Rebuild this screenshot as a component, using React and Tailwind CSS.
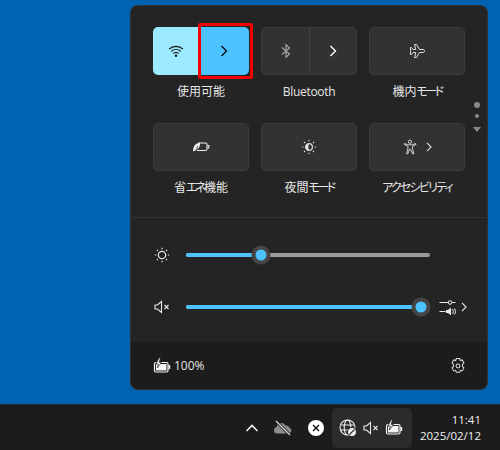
const font = { fontFamily: '"Open Sans","Noto Sans CJK JP",sans-serif' };

const Chevron = ({ c = "#fff", s = 12, w = 1.4 }) => (
  <svg width={s} height={s} viewBox="0 0 12 12" fill="none" stroke={c} strokeWidth={w}><path d="M3.500 1 8.500 6 3.500 11" /></svg>
);
const Wifi = () => (
  <svg width="16" height="16" viewBox="0 0 16 16" fill="none" stroke="#111" strokeWidth="1.100">
    <path d="M1 6.200C5 2.400 11 2.400 15 6.200" /><path d="M3.200 8.400c2.800-2.500 6.800-2.500 9.600 0" /><path d="M5.400 10.500c1.500-1.200 3.700-1.200 5.200 0" />
    <circle cx="8" cy="12.800" r="1.200" fill="#111" stroke="none" />
  </svg>
);
const Bt = () => (
  <svg width="14" height="16" viewBox="0 0 14 16" fill="none" stroke="#a8a8a8" strokeWidth="1.100"><path d="M3 4.500 10.500 11 7 14.500v-13L10.500 5 3 11.500" /></svg>
);
const Plane = () => (
  <svg width="16" height="16" viewBox="0 0 16 16" fill="none" stroke="#e0e0e0" strokeWidth="1"><path d="M14 6.500H10.500L7.500 1.500H5.500L6.800 6.500H4L2.800 4.700H1.200L1.800 8 1.200 11.300H2.800L4 9.500H6.800L5.500 14.500H7.500L10.500 9.500H14C15 9.500 15.700 8.800 15.700 8 15.700 7.200 15 6.500 14 6.500z" /></svg>
);
const Leaf = () => (
  <svg width="18" height="14" viewBox="0 0 18 14" fill="none" stroke="#eee" strokeWidth="1.100">
    <path d="M7 3h6.500A1.500 1.500 0 0 1 15 4.500v4.500a1.500 1.500 0 0 1-1.500 1.500H5" /><path d="M15.500 5.500h1.300v2.500h-1.300" />
    <path d="M1 11.500C1 6.500 3.500 3 8 2.500c.5 4.500-2 8-6.200 8.500z" fill="#eee" stroke="none" />
    <path d="M3.500 12 6 6" stroke="#323232" strokeWidth=".8" />
  </svg>
);
const Night = () => (
  <svg width="16" height="16" viewBox="0 0 16 16" fill="none" stroke="#ddd" strokeWidth="1.200">
    <circle cx="8" cy="8" r="3.400" /><path d="M8 4.600 6 5.500a3.400 3.400 0 0 0 2 5.900c-1-2-1-4.800 0-6.800z" fill="#eee" stroke="none" />
    <path d="M8 1v1.300M8 13.700V15M1 8h1.300M13.700 8H15M3 3l1 1M12 12l1 1M3 13l1-1M12 4l1-1" />
  </svg>
);
const Person = () => (
  <svg width="14" height="16" viewBox="0 0 16 18" fill="none" stroke="#ddd" strokeWidth="1.100">
    <circle cx="8" cy="3" r="1.900" />
    <path d="M1.500 5 5.500 6.500h5l4-1.500.4 1.100-4 2v3l1.500 5.500-1.200.4L8.500 11.500h-1L5.300 17 4.100 16.600l1.500-5.500v-3l-4-2z" />
  </svg>
);
const Sun = () => (
  <svg width="16" height="16" viewBox="0 0 16 16" fill="none" stroke="#e8e8e8" strokeWidth="1.200">
    <circle cx="8" cy="8" r="3.700" />
    <path d="M8 .8v1.400M8 13.800v1.400M.8 8h1.400M13.800 8h1.400M2.900 2.900l1 1M12.100 12.100l1 1M2.900 13.100l1-1M12.100 3.900l1-1" />
  </svg>
);
const Mute = ({ s = 16 }) => (
  <svg width={s} height={s} viewBox="0 0 16 16" fill="none" stroke="#e8e8e8" strokeWidth="1.100">
    <path d="M1 6h2.500L7.500 2.500v11L3.500 10H1z" /><path d="M10.500 6l4 4M14.500 6l-4 4" />
  </svg>
);
const Mixer = () => (
  <svg width="18" height="16" viewBox="0 0 18 16" fill="none" stroke="#eee" strokeWidth="1">
    <path d="M.500 3.500h9M13 3.500h3.500" /><circle cx="11" cy="3.500" r="1.800" />
    <path d="M.500 12.500h6" /><path d="M7 11h2l3-2.500v8L9 14H7z" fill="#eee" stroke="none" /><path d="M13.500 10c1 1.300 1 3.700 0 5M15.500 9.500c1.300 1.700 1.300 4.300 0 6" />
  </svg>
);
const Battery = () => (
  <svg width="18" height="18" viewBox="0 0 18 18" fill="none">
    <rect x="1.500" y="5.500" width="13.500" height="9.500" rx="1.500" stroke="#f5f5f5" strokeWidth="1.200" />
    <rect x="3" y="7" width="10.500" height="6.500" fill="#f5f5f5" />
    <path d="M15.500 8h1.700v4h-1.700z" fill="#f5f5f5" />
    <path d="M6 .8 3 7h2.300L4.300 11 8.500 5.500H6.200L7.500.8z" fill="#f5f5f5" stroke="#1c1c1c" strokeWidth=".7" />
  </svg>
);
const Gear = () => (
  <svg width="16" height="16" viewBox="1 1 14 14" fill="none" stroke="#d8d8d8" strokeWidth=".9">
    <path d="M6.500 1.500h3l.5 1.700 1.700-.5 1.500 2.600-1.300 1.300v1.800l1.300 1.300-1.500 2.600-1.700-.5-.5 1.700h-3l-.5-1.700-1.700.5-1.500-2.600 1.300-1.300V6.600L2.800 5.300l1.500-2.600 1.700.5z" />
    <circle cx="8" cy="8" r="1.700" />
  </svg>
);
const Cloud = () => (
  <svg width="20" height="18" viewBox="0 0 20 18" fill="none">
    <path d="M4 14.500a3.300 3.300 0 0 1-.4-6.500 4.800 4.800 0 0 1 9-1.500 3.800 3.800 0 0 1 3.800 2.200A3 3 0 0 1 16 14.500z" fill="#8c8c8c" />
    <path d="M2.500 1.500 17.500 16.500" stroke="#1c1c1c" strokeWidth="3" /><path d="M3 2 17 16" stroke="#ddd" strokeWidth="1.300" />
  </svg>
);
const Globe = () => (
  <svg width="18" height="18" viewBox="0 0 18 18" fill="none" stroke="#f0f0f0" strokeWidth="1.100">
    <circle cx="8.500" cy="8.500" r="7.500" /><ellipse cx="8.500" cy="8.500" rx="3.300" ry="7.500" /><path d="M1.500 6h14M1.500 11h14" />
    <circle cx="13" cy="13" r="4.500" fill="#f0f0f0" stroke="#2b2b2b" /><path d="M10.500 15.500l5-5" stroke="#2b2b2b" />
  </svg>
);

const Kana = ({ children }) => <span className="tracking-[-2.500px]">{children}</span>;

function Tile({ icon, label, children, tone = "" }) {
  return (
    <div className="w-24 flex flex-col items-center">
      {children || (
        <div className="h-12 w-24 rounded-[5px] bg-[#323232] border border-[#3b3b3b] flex items-center justify-center">{icon}</div>
      )}
      <div className={"mt-2 h-[18px] text-[12px] leading-[18px] text-[#e6e6e6] whitespace-nowrap [font-feature-settings:'palt'] " + tone}>{label}</div>
    </div>
  );
}

function Slider({ icon, pct, right }) {
  return (
    <div className="flex items-center h-6 pl-[23px]">
      <span className="shrink-0">{icon}</span>
      <div className="ml-[16px] w-[244px] h-1 rounded-full bg-[#9a9a9a] relative">
        <div className="h-1 rounded-full bg-[#4cc2ff]" style={{ width: pct }} />
        <div className="absolute top-1/2 -translate-x-1/2 -translate-y-1/2 w-[19px] h-[19px] rounded-full bg-[#454545] flex items-center justify-center" style={{ left: pct }}>
          <div className="w-[11px] h-[11px] rounded-full bg-[#4cc2ff]" />
        </div>
      </div>
      {right}
    </div>
  );
}

export default function App() {
  return (
    <div style={font} className="w-[500px] h-[450px] flex flex-col bg-[#0063b1] overflow-hidden">
      <div className="h-[404px] pt-[5px] pl-[130px]">
        <div className="w-[358px] h-[385px] rounded-[8px] bg-[#242424] border border-[#3a3a3a]/60 overflow-hidden flex flex-col">
          <div className="h-[212px] pt-[21px] pl-[22px] relative border-b border-[#333]">
            <div className="flex gap-3">
              <Tile label="使用可能">
                <div className="h-12 w-24 rounded-[5px] flex relative">
                  <div className="w-[46px] bg-[#9ceaff] rounded-l-[5px] flex items-center justify-center"><Wifi /></div>
                  <div className="flex-1 bg-[#4cc2ff] rounded-r-[5px] flex items-center justify-center"><Chevron c="#111" /></div>
                  <div className="absolute top-[-4px] left-[45px] w-[55px] h-[56px] border-[3px] border-[#f00000] rounded-[2px]" />
                </div>
              </Tile>
              <Tile label="Bluetooth" tone="tracking-[-0.3px]">
                <div className="h-12 w-24 rounded-[5px] bg-[#323232] border border-[#3b3b3b] flex">
                  <div className="w-[47px] flex items-center justify-center"><Bt /></div>
                  <div className="flex-1 border-l border-[#454545] flex items-center justify-center"><Chevron /></div>
                </div>
              </Tile>
              <Tile label={<>機内<Kana>モード</Kana></>} icon={<Plane />} />
            </div>
            <div className="flex gap-3 mt-[22px]">
              <Tile label={<>省<Kana>エネ</Kana>機能</>} icon={<Leaf />} />
              <Tile label={<>夜間<Kana>モード</Kana></>} icon={<Night />} />
              <Tile label="アクセシビリティ" tone="tracking-[-1.800px]">
                <div className="h-12 w-24 rounded-[5px] bg-[#323232] border border-[#3b3b3b] flex items-center justify-center gap-[7px] pl-[2px]">
                  <Person /><Chevron c="#ddd" s={10} w={1.300} />
                </div>
              </Tile>
            </div>
            <div className="absolute left-[342px] top-[96px] flex flex-col items-center w-[8px]">
              <div className="w-[6px] h-[6px] rounded-full bg-[#8a8a8a]" />
              <div className="w-[4px] h-[4px] rounded-full bg-[#8a8a8a] mt-[6px]" />
              <div className="mt-[9px] w-0 h-0 border-x-[4px] border-x-transparent border-t-[5px] border-t-[#8a8a8a]" />
            </div>
          </div>
          <div className="flex-1 flex flex-col pt-[25px] gap-[28px]">
            <Slider icon={<Sun />} pct="30.600%" />
            <Slider
              icon={<Mute />}
              pct="96.300%"
              right={
                <div className="ml-[9px] flex items-center gap-[2px]">
                  <Mixer /><Chevron c="#e0e0e0" s={10} w={1.400} />
                </div>
              }
            />
          </div>
          <div className="h-[47px] bg-[#1c1c1c] flex items-center pl-[22px] pr-[21px] justify-between">
            <div className="flex items-center gap-[3px]">
              <Battery />
              <span className="text-[12px] text-[#e4e4e4]">100%</span>
            </div>
            <Gear />
          </div>
        </div>
      </div>
      <div className="flex-1 bg-[#1c1c1c] border-t border-[#2a2a2a] flex items-center pl-[244px] relative">
        <svg width="16" height="16" viewBox="0 0 16 16" fill="none" stroke="#f2f2f2" strokeWidth="1.600"><path d="M2.500 11 8 5.500 13.500 11" /></svg>
        <div className="ml-[13px]"><Cloud /></div>
        <div className="ml-[15px] w-4 h-4 rounded-full bg-white flex items-center justify-center">
          <svg width="8" height="8" viewBox="0 0 8 8" stroke="#111" strokeWidth="1.400"><path d="M1 1l6 6M7 1 1 7" /></svg>
        </div>
        <div className="ml-[8px] w-[80px] h-10 rounded-[5px] bg-[#2b2b2b] flex items-center pl-[7px] gap-[6px]">
          <Globe /><Mute /><Battery />
        </div>
        <div className="ml-auto pr-[19px] text-right text-[11.500px] leading-[16px] text-[#f0f0f0]">
          <div>11:41</div>
          <div>2025/02/12</div>
        </div>
      </div>
    </div>
  );
}
